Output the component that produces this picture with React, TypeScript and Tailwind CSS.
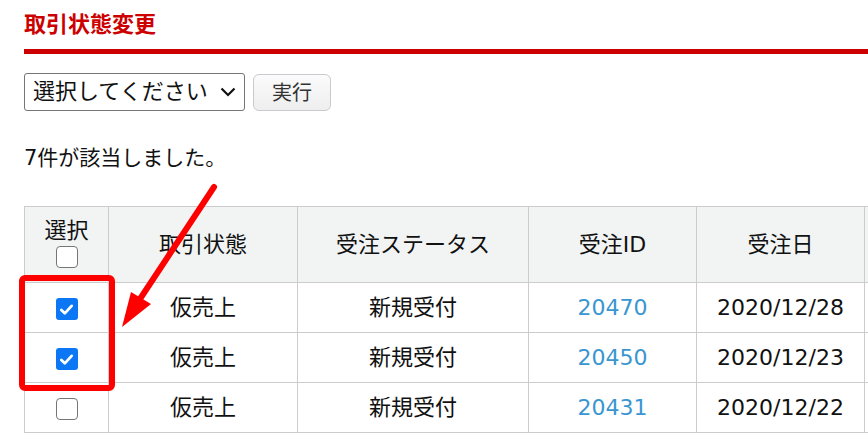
import React from "react";

const rows = [
  { checked: true, state: "仮売上", status: "新規受付", id: "20470", date: "2020/12/28" },
  { checked: true, state: "仮売上", status: "新規受付", id: "20450", date: "2020/12/23" },
  { checked: false, state: "仮売上", status: "新規受付", id: "20431", date: "2020/12/22" },
];

function Checkbox({ checked }: { checked: boolean }) {
  if (checked) {
    return (
      <span className="inline-flex h-[22px] w-[22px] items-center justify-center rounded-[3px] bg-[#0b77f4] align-middle">
        <svg width="15" height="15" viewBox="0 0 14 14">
          <path d="M2.2 7.4 L5.4 10.6 L11.8 3.6" fill="none" stroke="white" strokeWidth="2.6" strokeLinecap="round" strokeLinejoin="round" />
        </svg>
      </span>
    );
  }
  return <span className="inline-block h-[22px] w-[22px] rounded-[4px] border border-[#767676] bg-white align-middle" />;
}

export default function App() {
  return (
    <div
      className="relative h-[434px] w-[868px] overflow-hidden bg-white pl-6 text-[#111]"
      style={{ fontFamily: '"DejaVu Sans", "Noto Sans CJK JP", sans-serif' }}
    >
      <h2 className="border-b-[5px] border-[#cc0000] pt-[10px] pb-[9px] text-[22px] font-bold leading-[30px] text-[#cc0000]">
        取引状態変更
      </h2>

      <div className="mt-[18px] flex items-center gap-2">
        <div className="flex h-[38px] w-[221px] items-center justify-between rounded-[3px] border border-[#767676] pl-2 pr-2 text-[22px]">
          <span>選択してください</span>
          <svg width="16" height="10" viewBox="0 0 16 10">
            <path d="M1.5 1.5 L8 8 L14.5 1.5" fill="none" stroke="#111" strokeWidth="2.2" />
          </svg>
        </div>
        <button className="mt-[2px] h-[37px] w-[78px] rounded-[6px] border border-[#c9c9cf] bg-gradient-to-b from-[#fbfbfb] to-[#eeeeee] text-[20px] text-[#333]">
          実行
        </button>
      </div>

      <p className="mt-[34px] text-[21px] leading-[26px]">7件が該当しました。</p>

      <table className="mt-[35px] w-[1040px] table-fixed border-collapse text-[22px]">
        <colgroup>
          <col className="w-[84px]" />
          <col className="w-[189px]" />
          <col className="w-[231px]" />
          <col className="w-[168px]" />
          <col className="w-[168px]" />
          <col className="w-[200px]" />
        </colgroup>
        <thead>
          <tr className="h-[76px] bg-[#f2f4f4]">
            <th className="border border-[#cccccc] p-0 align-middle font-normal">
              <div className="flex flex-col items-center pb-[6px]">
                <span className="leading-[30px]">選択</span>
                <Checkbox checked={false} />
              </div>
            </th>
            <th className="border border-[#cccccc] font-normal">取引状態</th>
            <th className="border border-[#cccccc] font-normal">受注ステータス</th>
            <th className="border border-[#cccccc] font-normal">受注ID</th>
            <th className="border border-[#cccccc] font-normal">受注日</th>
            <th className="border border-[#cccccc] font-normal"></th>
          </tr>
        </thead>
        <tbody>
          {rows.map((r) => (
            <tr key={r.id} className="h-[50px]">
              <td className="border border-[#cccccc] p-0 text-center">
                <Checkbox checked={r.checked} />
              </td>
              <td className="border border-[#cccccc] text-center">{r.state}</td>
              <td className="border border-[#cccccc] text-center">{r.status}</td>
              <td className="border border-[#cccccc] text-center text-[#3a96d0]">{r.id}</td>
              <td className="border border-[#cccccc] text-center">{r.date}</td>
              <td className="border border-[#cccccc]"></td>
            </tr>
          ))}
        </tbody>
      </table>

      <svg className="pointer-events-none absolute left-0 top-0" width="868" height="434" viewBox="0 0 868 434">
        <rect x="22" y="278" width="90" height="110" rx="3" fill="none" stroke="#ff0000" strokeWidth="6" />
        <line x1="214" y1="187" x2="138" y2="302" stroke="#ff0000" strokeWidth="6" strokeLinecap="round" />
        <polygon points="122,327 131,292 151,304" fill="#ff0000" />
      </svg>
    </div>
  );
}
